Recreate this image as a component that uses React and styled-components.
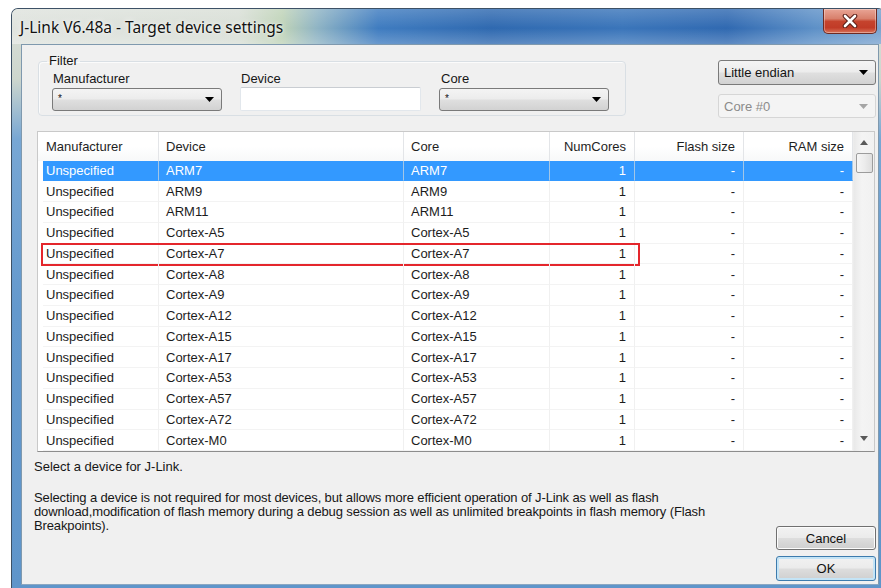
import React from 'react'
import styled, { createGlobalStyle } from 'styled-components'

const GlobalStyle = createGlobalStyle`
  html, body {
    margin: 0;
    padding: 0;
    background: #fff;
  }
  body {
    font-family: "Liberation Sans", Arial, sans-serif;
    overflow: hidden;
  }
`

const Page = styled.div`
  width: 881px;
  height: 588px;
  padding: 8px 0 0 11px;
  box-sizing: border-box;
  overflow: hidden;
`

const Window = styled.div`
  width: 874px;
  height: 580px;
  box-sizing: border-box;
  border: 1px solid #3d5166;
  border-bottom: none;
  border-radius: 7px 7px 0 0;
  background: linear-gradient(to bottom, #dadfd8 0px, #cdd6cd 70px, #78a7d4 130px, #6499cd 300px, #5f95ca 100%);
  display: flex;
  flex-direction: column;
  overflow: hidden;
`

const TitleBar = styled.div`
  height: 35px;
  flex-shrink: 0;
  display: flex;
  align-items: flex-start;
  justify-content: space-between;
  background:
    linear-gradient(to bottom, rgba(255,255,255,0.18) 0%, rgba(255,255,255,0) 55%, rgba(255,255,255,0.22) 100%),
    linear-gradient(to right, #dfe3de 0%, #d9dfd7 26%, #bfd3b8 31%, #8fb4c4 35%, #3f7cc0 42%, #2f69b0 55%, #3a75ba 70%, #3069b1 82%, #5d90c7 92%, #7aa3cf 100%);
`

const TitleText = styled.div`
  font-family: "Noto Sans", "Liberation Sans", sans-serif;
  font-size: 15.5px;
  color: #111;
  padding: 7px 0 0 8px;
  text-shadow: 0 0 6px rgba(255,255,255,0.9), 0 0 2px rgba(255,255,255,0.9);
  white-space: nowrap;
`

const CloseButton = styled.div`
  width: 54px;
  height: 25px;
  margin-right: 7px;
  box-sizing: border-box;
  border: 1px solid #6e2a22;
  border-top: none;
  border-radius: 0 0 5px 5px;
  background: linear-gradient(to bottom, #e9a596 0%, #d8806c 40%, #c5432d 52%, #c13b27 78%, #d9735a 100%);
  box-shadow: inset 0 0 0 1px rgba(255,255,255,0.35);
  display: flex;
  align-items: center;
  justify-content: center;
`

const FrameBody = styled.div`
  flex: 1;
  display: flex;
  padding: 0 8px 3px 9px;
`

const Client = styled.div`
  flex: 1;
  display: flex;
  flex-direction: column;
  background: #f0f0f0;
  border: 1px solid #7f99ae;
  border-bottom-color: #8aa7c2;
  height: 541px;
  box-sizing: border-box;
  color: #161616;
  font-size: 13px;
`

const TopRow = styled.div`
  display: flex;
  align-items: flex-start;
  padding: 9px 2px 0 16px;
`

const GroupBox = styled.fieldset`
  margin: 0;
  width: 588px;
  box-sizing: border-box;
  padding: 4px 16px 4px 13px;
  border: 1px solid #d9dfe4;
  border-radius: 4px;
  box-shadow: inset 1px 1px 0 #fbfbfb;
`

const Legend = styled.legend`
  padding: 0 2px;
  margin-left: -5px;
  line-height: 14px;
  font-size: 13px;
`

const FilterFields = styled.div`
  display: flex;
  gap: 18px;
`

const Field = styled.div`
  display: flex;
  flex-direction: column;
  width: ${p => p.$w}px;
  gap: ${p => p.$gap || 2}px;
`

const FieldLabel = styled.div`
  line-height: 14px;
  padding-left: ${p => p.$indent || 1}px;
`

const Combo = styled.div`
  height: ${p => p.$h || 23}px;
  box-sizing: border-box;
  border: 1px solid ${p => (p.$disabled ? '#d6d6d6' : '#7a7a7a')};
  border-radius: 3px;
  background: ${p =>
    p.$disabled
      ? '#f4f4f4'
      : 'linear-gradient(to bottom, #f4f4f4 0%, #ececec 48%, #dfdfdf 52%, #d2d2d2 100%)'};
  display: flex;
  align-items: center;
  justify-content: space-between;
  padding: 0 7px 0 5px;
  color: ${p => (p.$disabled ? '#8b8b8b' : '#141414')};
  font-size: 13px;
`

const ComboValue = styled.span`
  font-size: ${p => (p.$small ? 10 : 13)}px;
  align-self: ${p => (p.$small ? 'flex-start' : 'center')};
  margin-top: ${p => (p.$small ? 4 : 0)}px;
`

const TextInput = styled.div`
  height: 24px;
  box-sizing: border-box;
  background: #fff;
  border: 1px solid #e2e7ec;
  border-top-color: #c9cdd2;
  border-radius: 2px;
`

const SideColumn = styled.div`
  margin-left: auto;
  width: 158px;
  display: flex;
  flex-direction: column;
  gap: 9px;
  padding-top: 6px;
`

const ListView = styled.div`
  margin: 13px 3px 0 15px;
  height: 321px;
  box-sizing: border-box;
  border: 1px solid #c9c9c9;
  border-bottom-color: #8d8d8d;
  background: #fff;
  display: flex;
  overflow: hidden;
`

const ListMain = styled.div`
  flex: 1;
  display: flex;
  flex-direction: column;
`

const COLS = [116, 245, 146, 85, 109, 109]

const HeaderRow = styled.div`
  display: grid;
  grid-template-columns: 121px ${COLS.slice(1).map(c => c + 'px').join(' ')};
  height: 29px;
  background: linear-gradient(to bottom, #ffffff 0%, #ffffff 50%, #f7f8f9 100%);
`

const HeaderCell = styled.div`
  display: flex;
  align-items: center;
  justify-content: ${p => (p.$right ? 'flex-end' : 'flex-start')};
  padding: ${p => (p.$right ? '0 8px 0 0' : p.$first ? '0 0 0 8px' : '0 0 0 7px')};
  border-right: 1px solid #e3e5e8;
  box-sizing: border-box;
  color: #1e1e1e;
`

const Rows = styled.div`
  padding-left: 5px;
`

const Row = styled.div`
  position: relative;
  display: grid;
  grid-template-columns: ${COLS.map(c => c + 'px').join(' ')};
  height: 20.75px;
  background: ${p => (p.$selected ? '#3399ff' : 'transparent')};
  color: ${p => (p.$selected ? '#fff' : '#1c1c1c')};

  ${p =>
    p.$marked &&
    `
    &::after {
      content: '';
      position: absolute;
      left: -2px;
      top: -1px;
      width: 599px;
      height: 23px;
      border: 2px solid #e4262c;
      box-sizing: border-box;
      pointer-events: none;
    }
  `}
`

const Cell = styled.div`
  display: flex;
  align-items: center;
  justify-content: ${p => (p.$right ? 'flex-end' : 'flex-start')};
  padding: ${p => (p.$right ? '0 8px 0 0' : p.$first ? '0 0 0 3px' : '0 0 0 7px')};
  border-right: 1px solid ${p => (p.$selected ? 'rgba(255,235,210,0.55)' : '#f0f0f0')};
  border-bottom: 1px solid ${p => (p.$selected ? 'transparent' : '#f3f3f3')};
  box-sizing: border-box;
  white-space: nowrap;
  overflow: hidden;
`

const ScrollBar = styled.div`
  width: 20px;
  flex-shrink: 0;
  display: flex;
  flex-direction: column;
  align-items: center;
  background: linear-gradient(to right, #e9e9e9 0%, #f4f4f4 40%, #f1f1f1 100%);
  border-left: 1px solid #ececec;
`

const ScrollArrow = styled.div`
  height: 20px;
  width: 100%;
  display: flex;
  align-items: center;
  justify-content: center;
  margin-bottom: ${p => p.$mb || 0}px;
`

const Thumb = styled.div`
  width: 17px;
  height: 20px;
  margin-top: 1px;
  box-sizing: border-box;
  border: 1px solid #9c9c9c;
  border-radius: 2px;
  background: linear-gradient(to right, #f6f6f6 0%, #ececec 50%, #dedede 100%);
`

const Spacer = styled.div`
  flex: 1;
`

const BottomArea = styled.div`
  flex: 1;
  display: flex;
  padding: 8px 2px 3px 12px;
`

const InfoText = styled.div`
  flex: 1;
  line-height: 14px;
  font-size: 13px;
`

const InfoPara = styled.p`
  margin: ${p => p.$mt || 0}px 0 0;
  white-space: nowrap;
  letter-spacing: ${p => (p.$tight ? '-0.12px' : 'normal')};
`

const ButtonColumn = styled.div`
  width: 100px;
  display: flex;
  flex-direction: column;
  justify-content: flex-end;
  gap: 6px;
`

const Button = styled.div`
  height: ${p => p.$h}px;
  box-sizing: border-box;
  border: 1px solid ${p => (p.$default ? '#3d7bad' : '#707070')};
  border-radius: 3px;
  background: linear-gradient(to bottom, #f2f2f2 0%, #ebebeb 48%, #dddddd 52%, #cfcfcf 100%);
  box-shadow: ${p => (p.$default ? 'inset 0 0 0 2px #c4e4f6' : 'inset 0 0 0 1px #fcfcfc')};
  display: flex;
  align-items: center;
  justify-content: center;
  color: #111;
  font-size: 13px;
`

const DropArrow = ({ color = '#000' }) => (
  <svg width="9" height="5" viewBox="0 0 9 5">
    <path d="M0 0 L9 0 L4.5 5 Z" fill={color} />
  </svg>
)

const ScrollGlyph = ({ up }) => (
  <svg width="8" height="5" viewBox="0 0 8 5">
    <path d={up ? 'M0 5 L8 5 L4 0 Z' : 'M0 0 L8 0 L4 5 Z'} fill="#5a5a5a" />
  </svg>
)

const CloseGlyph = () => (
  <svg width="16" height="14" viewBox="0 0 16 14">
    <path d="M3 2 L13 12 M13 2 L3 12" stroke="#5a1e17" strokeWidth="4.6" strokeLinecap="round" />
    <path d="M3 2 L13 12 M13 2 L3 12" stroke="#fff" strokeWidth="2.6" strokeLinecap="round" />
  </svg>
)

const devices = [
  'ARM7', 'ARM9', 'ARM11', 'Cortex-A5', 'Cortex-A7', 'Cortex-A8', 'Cortex-A9',
  'Cortex-A12', 'Cortex-A15', 'Cortex-A17', 'Cortex-A53', 'Cortex-A57', 'Cortex-A72', 'Cortex-M0',
]

export default function App() {
  return (
    <Page>
      <GlobalStyle />
      <Window>
        <TitleBar>
          <TitleText>J-Link V6.48a - Target device settings</TitleText>
          <CloseButton>
            <CloseGlyph />
          </CloseButton>
        </TitleBar>
        <FrameBody>
          <Client>
            <TopRow>
              <GroupBox>
                <Legend>Filter</Legend>
                <FilterFields>
                  <Field $w={170}>
                    <FieldLabel>Manufacturer</FieldLabel>
                    <Combo>
                      <ComboValue $small>*</ComboValue>
                      <DropArrow />
                    </Combo>
                  </Field>
                  <Field $w={181} $gap={1}>
                    <FieldLabel>Device</FieldLabel>
                    <TextInput />
                  </Field>
                  <Field $w={170}>
                    <FieldLabel $indent={2}>Core</FieldLabel>
                    <Combo>
                      <ComboValue $small>*</ComboValue>
                      <DropArrow />
                    </Combo>
                  </Field>
                </FilterFields>
              </GroupBox>
              <SideColumn>
                <Combo $h={25}>
                  <ComboValue>Little endian</ComboValue>
                  <DropArrow />
                </Combo>
                <Combo $h={24} $disabled>
                  <ComboValue>Core #0</ComboValue>
                  <DropArrow color="#a5a5a5" />
                </Combo>
              </SideColumn>
            </TopRow>

            <ListView>
              <ListMain>
                <HeaderRow>
                  <HeaderCell $first>Manufacturer</HeaderCell>
                  <HeaderCell>Device</HeaderCell>
                  <HeaderCell>Core</HeaderCell>
                  <HeaderCell $right>NumCores</HeaderCell>
                  <HeaderCell $right>Flash size</HeaderCell>
                  <HeaderCell $right>RAM size</HeaderCell>
                </HeaderRow>
                <Rows>
                  {devices.map((d, i) => {
                    const sel = i === 0
                    return (
                      <Row key={d} $selected={sel} $marked={d === 'Cortex-A7'}>
                        <Cell $first $selected={sel}>Unspecified</Cell>
                        <Cell $selected={sel}>{d}</Cell>
                        <Cell $selected={sel}>{d}</Cell>
                        <Cell $right $selected={sel}>1</Cell>
                        <Cell $right $selected={sel}>-</Cell>
                        <Cell $right $selected={sel}>-</Cell>
                      </Row>
                    )
                  })}
                </Rows>
              </ListMain>
              <ScrollBar>
                <ScrollArrow>
                  <ScrollGlyph up />
                </ScrollArrow>
                <Thumb />
                <Spacer />
                <ScrollArrow $mb={3}>
                  <ScrollGlyph />
                </ScrollArrow>
              </ScrollBar>
            </ListView>

            <BottomArea>
              <InfoText>
                <InfoPara>Select a device for J-Link.</InfoPara>
                <InfoPara $mt={17} $tight>
                  Selecting a device is not required for most devices, but allows more efficient operation of J-Link as well as flash
                  <br />
                  download,modification of flash memory during a debug session as well as unlimited breakpoints in flash memory (Flash
                  <br />
                  Breakpoints).
                </InfoPara>
              </InfoText>
              <ButtonColumn>
                <Button $h={24}>Cancel</Button>
                <Button $h={25} $default>OK</Button>
              </ButtonColumn>
            </BottomArea>
          </Client>
        </FrameBody>
      </Window>
    </Page>
  )
}
